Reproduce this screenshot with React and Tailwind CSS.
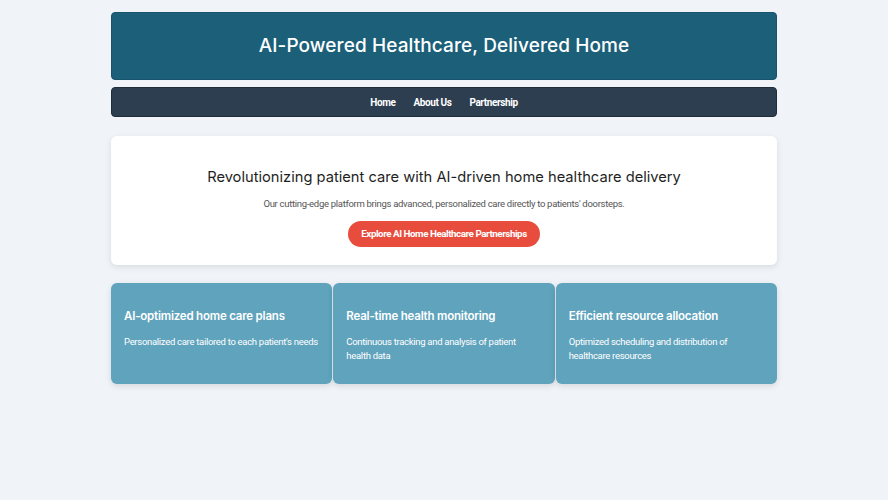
export default function App() {
  const head = { fontFamily: "Inter, 'Noto Sans', sans-serif" };
  const body = { fontFamily: "Roboto, 'Liberation Sans', sans-serif" };
  const features = [
    ["AI-optimized home care plans", "Personalized care tailored to each patient's needs"],
    ["Real-time health monitoring", "Continuous tracking and analysis of patient health data"],
    ["Efficient resource allocation", "Optimized scheduling and distribution of healthcare resources"],
  ];
  return (
    <div className="min-h-[500px] bg-[#f0f4f8]" style={body}>
      <div className="w-[75%] mx-auto pt-[12px]">
        <header className="h-[68px] bg-[#1b5f79] rounded-[4px] border border-[#17536a] flex items-center justify-center">
          <h1 className="text-white text-[19px] font-medium tracking-[0.1px]" style={head}>
            AI-Powered Healthcare, Delivered Home
          </h1>
        </header>
        <nav className="mt-[7px] h-[30px] bg-[#2c3e50] rounded-[4px] border border-[#1f2d3b] flex items-center justify-center gap-[18px]">
          {["Home", "About Us", "Partnership"].map((t) => (
            <a key={t} className="text-white text-[10px] font-bold tracking-[-0.4px]">{t}</a>
          ))}
        </nav>
        <section className="mt-[19px] h-[129px] bg-white rounded-[6px] shadow-[0_2px_6px_rgba(0,0,0,0.1)] flex flex-col items-center pt-[30px]">
          <h2 className="text-[#1f1f1f] text-[14.7px] font-normal" style={head}>
            Revolutionizing patient care with AI-driven home healthcare delivery
          </h2>
          <p className="mt-[9px] text-[#555] text-[9.5px] tracking-[-0.3px]">
            Our cutting-edge platform brings advanced, personalized care directly to patients' doorsteps.
          </p>
          <button className="mt-[10px] h-[26px] px-[13px] rounded-full bg-[#e74c3c] text-white text-[9.8px] font-bold tracking-[-0.45px]">
            Explore AI Home Healthcare Partnerships
          </button>
        </section>
        <div className="mt-[18px] grid grid-cols-3 gap-[1px]">
          {features.map(([t, d]) => (
            <div key={t} className="h-[101px] bg-[#5fa3bd] rounded-[6px] shadow-[0_2px_6px_rgba(0,0,0,0.12)] px-[13px] pt-[25px]">
              <h3 className="text-white text-[11.5px] font-semibold tracking-[-0.2px]" style={head}>{t}</h3>
              <p className="mt-[10px] text-white text-[9.5px] leading-[14px] tracking-[-0.3px]">{d}</p>
            </div>
          ))}
        </div>
      </div>
    </div>
  );
}
